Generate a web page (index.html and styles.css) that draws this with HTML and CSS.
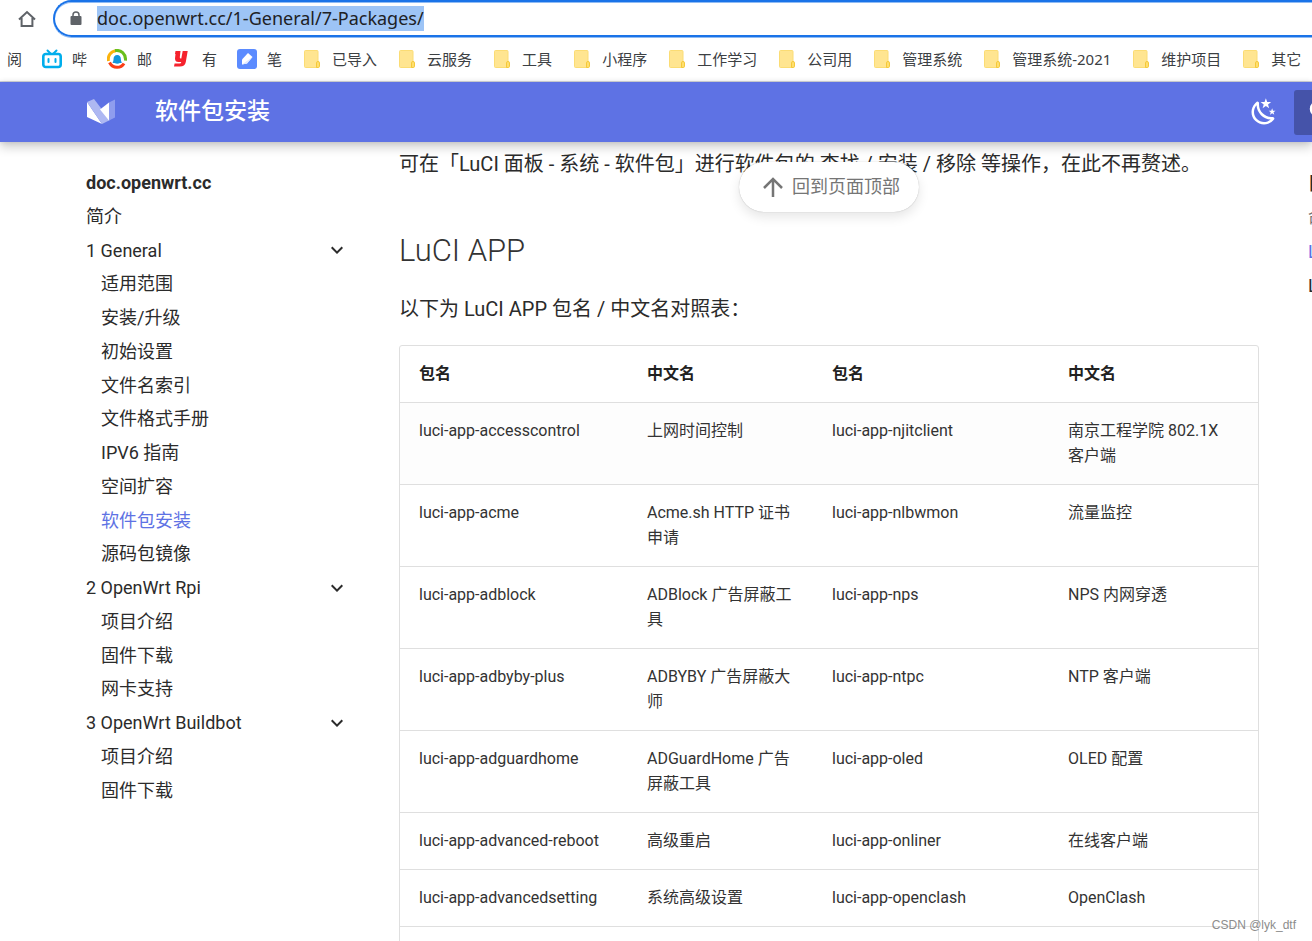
FILE: index.html
```html
<!DOCTYPE html>
<html lang="zh-CN">
<head>
<meta charset="utf-8">
<title>软件包安装 - doc.openwrt.cc</title>
<link rel="stylesheet" href="styles.css">
</head>
<body>
<svg class="defs" width="0" height="0" aria-hidden="true">
  <symbol id="folder" viewBox="0 0 20 20">
    <rect x="2.500" y="1.500" width="13.500" height="17" rx="1" fill="#ffe591" stroke="#fbdc74"/>
    <path d="M14.500 18.500v-4.700q0-1.300 1.500-1.300t1.500 1.300v3.500q0 1.200-1.200 1.200z" fill="#ffdf6e" stroke="#f5c93a"/>
  </symbol>
  <symbol id="chevron" viewBox="0 0 24 24"><path d="M7.41 8.59 12 13.17l4.59-4.58L18 10l-6 6-6-6z" fill="currentColor"/></symbol>
</svg>

<div class="browser">
  <div class="toolbar">
    <button class="home" aria-label="主页">
      <svg viewBox="0 0 20 20" width="20" height="20"><path d="M2 10.500 10 3l8 7.500M4.600 9v8h10.800V9" fill="none" stroke="#5f6368" stroke-width="2"/></svg>
    </button>
    <div class="omnibox">
      <svg viewBox="0 0 12 16" width="12" height="16" aria-hidden="true"><rect x="0.500" y="5" width="11" height="9" rx="1" fill="#5f6368"/><path d="M3 6V4a3 3 0 0 1 6 0v2" fill="none" stroke="#5f6368" stroke-width="1.500"/></svg>
      <input class="url" type="text" aria-label="地址栏" value="doc.openwrt.cc/1-General/7-Packages/">
    </div>
  </div>
  <nav class="bookmarks" aria-label="书签栏">
    <a href="#">阅</a>
    <a href="#"><svg viewBox="0 0 20 20"><path d="M5.500 1.500l3 3M14.500 1.500l-3 3" stroke="#00aeec" stroke-width="2" stroke-linecap="round"/><rect x="1.300" y="5" width="17.400" height="13" rx="2.500" fill="#fff" stroke="#00aeec" stroke-width="2.600"/><path d="M6.500 10v3M13.500 10v3" stroke="#00aeec" stroke-width="2" stroke-linecap="round"/></svg>哔</a>
    <a href="#"><svg viewBox="0 0 20 20"><path d="M1.500 12A8.500 8.500 0 0 1 9 1.700" fill="none" stroke="#fbb30d" stroke-width="3"/><path d="M8 1.600c6-1 11 3 10.500 10" fill="none" stroke="#6abf1b" stroke-width="3"/><path d="M17 14.500C14 19.500 6 20 2.500 13.500" fill="none" stroke="#fa3e16" stroke-width="3"/><path d="M5.500 13.500q1-1 1-3a3.700 4.500 0 0 1 7.400 0q0 2 1 3-1 .7-2 .5-2.500 1.500-5.400 0-1 .2-2-.5z" fill="#1296db"/></svg>邮</a>
    <a href="#"><svg viewBox="0 0 20 20"><path d="M3.500 2h5L7.800 8.300q0 1.500 1.500 1.200l1.400-7.500h5L13.800 13q-.8 4.500-6 4.500H2l.6-3h5q1.500 0 1.700-1.500H6.500Q3 13 3 9.500L3.500 5H3z" fill="#f5222d"/></svg>有</a>
    <a href="#"><svg viewBox="0 0 20 20"><rect width="20" height="20" rx="3" fill="#5b8bff"/><path d="M5 10.500 11 4l4.500 4L10 14.500l-5 1z" fill="#fff"/><path d="M5 15.500 15.500 8 10 14.500z" fill="#dfe8ff"/></svg>笔</a>
    <a href="#"><svg><use href="#folder"/></svg>已导入</a>
    <a href="#"><svg><use href="#folder"/></svg>云服务</a>
    <a href="#"><svg><use href="#folder"/></svg>工具</a>
    <a href="#"><svg><use href="#folder"/></svg>小程序</a>
    <a href="#"><svg><use href="#folder"/></svg>工作学习</a>
    <a href="#"><svg><use href="#folder"/></svg>公司用</a>
    <a href="#"><svg><use href="#folder"/></svg>管理系统</a>
    <a href="#"><svg><use href="#folder"/></svg>管理系统-2021</a>
    <a href="#"><svg><use href="#folder"/></svg>维护项目</a>
    <a href="#"><svg><use href="#folder"/></svg>其它</a>
  </nav>
</div>

<header class="header">
  <a class="logo" href="#" aria-label="doc.openwrt.cc"><svg viewBox="0 0 30 30" width="30" height="30"><path d="M1 5v15l15 7z" fill="#fff"/><path d="M1 5l7-3 16 21-8 4z" fill="#aeb8f2"/><path d="M14 12.500 23 5.500V23.500z" fill="#fff"/><path d="M23 5.500 29 2.500V20.500L23 23.500z" fill="#8f9dee"/></svg></a>
  <span class="title">软件包安装</span>
  <button class="theme" aria-label="切换主题"><svg viewBox="0 0 24 24" width="30" height="30"><path fill="#fff" d="M17.750 4.090l-2.530 1.940.91 3.060-2.630-1.810-2.630 1.810.91-3.060-2.530-1.940L12.440 4l1.060-3 1.060 3 3.190.09m3.500 6.910l-1.640 1.250.59 1.980-1.700-1.170-1.700 1.170.59-1.980L15.750 11l2.060-.05L18.500 9l.69 1.950 2.060.05m-2.280 4.950c.83-.08 1.720 1.100 1.190 1.850-.32.45-.66.87-1.080 1.270C15.170 23 8.840 23 4.940 19.070c-3.910-3.900-3.910-10.240 0-14.140.4-.4.82-.76 1.270-1.080.75-.53 1.930.36 1.850 1.190-.27 2.860.69 5.830 2.890 8.020a9.960 9.960 0 0 0 8.020 2.890m-1.640 2.020a12.080 12.080 0 0 1-7.800-3.470c-2.170-2.190-3.330-5-3.490-7.820-2.810 3.140-2.700 7.960.31 10.980 3.020 3.010 7.840 3.120 10.980.31z"/></svg></button>
  <button class="search" aria-label="搜索"><svg viewBox="0 0 24 24" width="30" height="30"><path fill="#fff" d="M9.500 3A6.500 6.500 0 0 1 16 9.500c0 1.610-.59 3.090-1.560 4.230l.27.270h.79l5 5-1.500 1.500-5-5v-.79l-.27-.27A6.516 6.516 0 0 1 9.500 16a6.500 6.500 0 0 1 0-13m0 2C7 5 5 7 5 9.500S7 14 9.500 14 14 12 14 9.500 12 5 9.500 5z"/></svg></button>
</header>

<div class="page">
  <nav class="sidebar" aria-label="导航">
    <strong class="site">doc.openwrt.cc</strong>
    <ul>
      <li><a href="#">简介</a></li>
      <li><a href="#">1 General<svg><use href="#chevron"/></svg></a>
        <ul>
          <li><a href="#">适用范围</a></li>
          <li><a href="#">安装/升级</a></li>
          <li><a href="#">初始设置</a></li>
          <li><a href="#">文件名索引</a></li>
          <li><a href="#">文件格式手册</a></li>
          <li><a href="#">IPV6 指南</a></li>
          <li><a href="#">空间扩容</a></li>
          <li><a class="active" href="#">软件包安装</a></li>
          <li><a href="#">源码包镜像</a></li>
        </ul>
      </li>
      <li><a href="#">2 OpenWrt Rpi<svg><use href="#chevron"/></svg></a>
        <ul>
          <li><a href="#">项目介绍</a></li>
          <li><a href="#">固件下载</a></li>
          <li><a href="#">网卡支持</a></li>
        </ul>
      </li>
      <li><a href="#">3 OpenWrt Buildbot<svg><use href="#chevron"/></svg></a>
        <ul>
          <li><a href="#">项目介绍</a></li>
          <li><a href="#">固件下载</a></li>
        </ul>
      </li>
    </ul>
  </nav>

  <main class="content">
    <button class="top"><svg viewBox="0 0 24 24" width="30" height="30" aria-hidden="true"><path fill="currentColor" d="M13 20h-2V8l-5.500 5.500-1.420-1.420L12 4.160l7.920 7.920-1.420 1.420L13 8z"/></svg>回到页面顶部</button>
    <p>可在「LuCI 面板 - 系统 - 软件包」进行软件包的 查找 / 安装 / 移除 等操作，在此不再赘述。</p>
    <h2>LuCI APP</h2>
    <p>以下为 LuCI APP 包名 / 中文名对照表：</p>
    <table>
      <colgroup><col class="pkg-a"><col class="name-a"><col class="pkg-b"><col></colgroup>
      <thead><tr><th>包名</th><th>中文名</th><th>包名</th><th>中文名</th></tr></thead>
      <tbody>
        <tr><td>luci-app-accesscontrol</td><td>上网时间控制</td><td>luci-app-njitclient</td><td>南京工程学院 802.1X 客户端</td></tr>
        <tr><td>luci-app-acme</td><td>Acme.sh HTTP 证书申请</td><td>luci-app-nlbwmon</td><td>流量监控</td></tr>
        <tr><td>luci-app-adblock</td><td>ADBlock 广告屏蔽工具</td><td>luci-app-nps</td><td>NPS 内网穿透</td></tr>
        <tr><td>luci-app-adbyby-plus</td><td>ADBYBY 广告屏蔽大师</td><td>luci-app-ntpc</td><td>NTP 客户端</td></tr>
        <tr><td>luci-app-adguardhome</td><td>ADGuardHome 广告屏蔽工具</td><td>luci-app-oled</td><td>OLED 配置</td></tr>
        <tr><td>luci-app-advanced-reboot</td><td>高级重启</td><td>luci-app-onliner</td><td>在线客户端</td></tr>
        <tr><td>luci-app-advancedsetting</td><td>系统高级设置</td><td>luci-app-openclash</td><td>OpenClash</td></tr>
        <tr class="spare"><td></td><td></td><td></td><td></td></tr>
      </tbody>
    </table>
  </main>

  <nav class="toc" aria-label="目录">
    <strong>目录</strong>
    <a class="passed" href="#">命令</a>
    <a class="active" href="#">LuCI APP</a>
    <a href="#">LuCI</a>
  </nav>
</div>
<div class="watermark">CSDN @lyk_dtf</div>
</body>
</html>
```

FILE: styles.css
```css
* { box-sizing: border-box; }
body {
  margin: 0;
  height: 100vh;
  overflow: hidden;
  display: flex;
  flex-direction: column;
  background: #fff;
  color: #2b2b2b;
  font-family: Roboto, "Noto Sans CJK SC", sans-serif;
  font-weight: 400;
  -webkit-font-smoothing: antialiased;
}
a { color: inherit; text-decoration: none; }
button { border: 0; padding: 0; background: none; font: inherit; color: inherit; }
ul { list-style: none; margin: 0; padding: 0; }
.defs { position: absolute; }

/* Browser chrome */
.browser { flex: none; border-bottom: 1px solid #d5d8dd; }
.toolbar { display: flex; height: 37px; }
.home { width: 53px; display: grid; place-items: center; }
.omnibox {
  flex: 1;
  display: flex;
  align-items: center;
  gap: 15px;
  padding-left: 15px;
  border: 2px solid #1a73e8;
  border-right: 0;
  border-radius: 19px 0 0 19px;
  box-shadow: 0 1px #8fbbf4, inset 0 1px #8fbbf4;
}
.url {
  width: 327px;
  height: 25px;
  padding: 0 0 2px;
  border: 0;
  outline: 0;
  background: #9dc4f6;
  color: #202124;
  font: 18px "Noto Sans", sans-serif;
}
.bookmarks {
  display: flex;
  align-items: center;
  gap: 20px;
  height: 44px;
  padding: 0 0 1px 7px;
  overflow: hidden;
  white-space: nowrap;
  color: #3c4043;
  font: 15px/20px "Noto Sans", "Noto Sans CJK SC", sans-serif;
}
.bookmarks a { flex: none; display: flex; align-items: center; gap: 10px; }
.bookmarks svg { width: 20px; height: 20px; }

/* Site header */
.header {
  flex: none;
  z-index: 2;
  display: flex;
  align-items: center;
  height: 60px;
  padding-left: 86px;
  background: #5e72e4;
  color: #fff;
  box-shadow: 0 0 5px rgba(0, 0, 0, .1), 0 5px 10px rgba(0, 0, 0, .2);
}
.logo { display: flex; margin-right: 39px; }
.title { flex: 1; font-size: 23px; line-height: 32px; font-weight: 500; }
.theme { display: flex; margin-right: 15px; }
.search {
  width: 18px;
  height: 45px;
  padding-left: 12px;
  display: flex;
  align-items: center;
  overflow: hidden;
  border-radius: 3px 0 0 3px;
  background: #4553a9;
}
.search svg { flex: none; }

/* Page columns */
.page { flex: 1; min-height: 0; display: flex; padding-left: 86px; }
.sidebar {
  flex: none;
  width: 313px;
  padding: 24px 50px 0 0;
  font-size: 18px;
  line-height: 1.32;
}
.sidebar a, .site { display: flex; justify-content: space-between; align-items: center; padding: 5px 0; }
.site { font-weight: 700; }
.sidebar ul ul { padding-left: 15px; }
.sidebar svg { width: 24px; height: 24px; margin: -2px 0; }
.sidebar .active, .toc .active { color: #5e72e4; }

.content { position: relative; flex: 1; min-width: 0; padding-top: 6px; }
.content p { margin: 0; font-size: 20px; line-height: 32px; }
.content h2 { margin: 49px 0 20px; font-size: 31px; line-height: 44px; font-weight: 300; color: #333; }
.top {
  position: absolute;
  top: 20px;
  left: 50%;
  transform: translateX(-50%);
  display: flex;
  align-items: center;
  gap: 4px;
  height: 50px;
  padding: 0 19px;
  border-radius: 25px;
  background: #fff;
  color: #757575;
  font-size: 18px;
  line-height: 24px;
  white-space: nowrap;
  box-shadow: 0 5px 12px rgba(0, 0, 0, .1), 0 0 1px rgba(0, 0, 0, .3);
}

table {
  width: 100%;
  margin-top: 20px;
  table-layout: fixed;
  border: 1px solid #dfdfdf;
  border-radius: 3px;
  border-spacing: 0;
  font-size: 16px;
  line-height: 25px;
}
.pkg-a { width: 228px; }
.name-a { width: 185px; }
.pkg-b { width: 236px; }
th, td { padding: 15px 20px 16px 19px; text-align: left; vertical-align: top; border-bottom: 1px solid #dfdfdf; }
th { font-weight: 700; color: #212121; }
td { color: #333; }
tbody tr:first-child { background: #fdfdfd; }
.spare td { height: 57px; }

.toc {
  flex: none;
  width: 53px;
  padding: 25px 0 0 49px;
  display: flex;
  flex-direction: column;
  overflow: hidden;
  white-space: nowrap;
  font-size: 18px;
  line-height: 34px;
}
.toc .passed { color: #757575; }

.watermark {
  position: absolute;
  right: 16px;
  bottom: 8px;
  color: #8c8c8c;
  font: 12px/16px "Liberation Sans", sans-serif;
}
```
